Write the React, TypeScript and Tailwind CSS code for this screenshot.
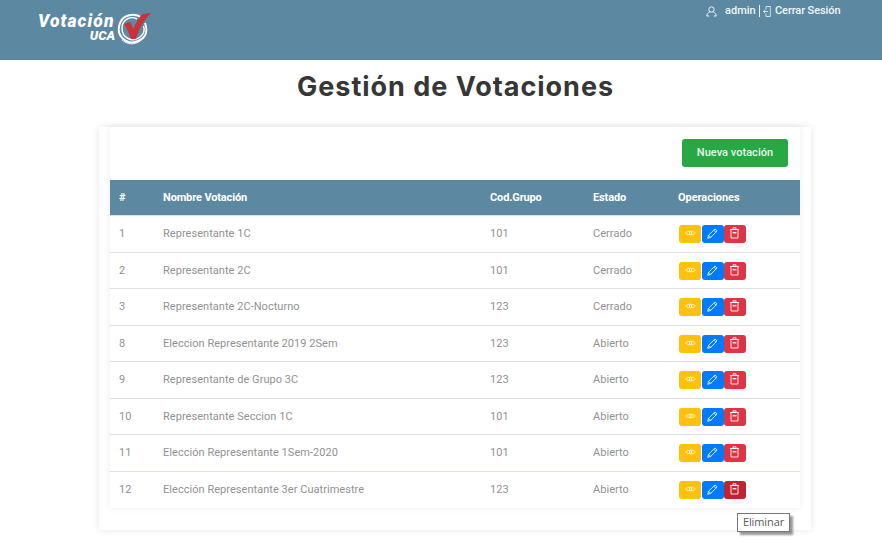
type Row = { id: number; name: string; code: number; state: string };

const rows: Row[] = [
  { id: 1, name: 'Representante 1C', code: 101, state: 'Cerrado' },
  { id: 2, name: 'Representante 2C', code: 101, state: 'Cerrado' },
  { id: 3, name: 'Representante 2C-Nocturno', code: 123, state: 'Cerrado' },
  { id: 8, name: 'Eleccion Representante 2019 2Sem', code: 123, state: 'Abierto' },
  { id: 9, name: 'Representante de Grupo 3C', code: 123, state: 'Abierto' },
  { id: 10, name: 'Representante Seccion 1C', code: 101, state: 'Abierto' },
  { id: 11, name: 'Elección Representante 1Sem-2020', code: 101, state: 'Abierto' },
  { id: 12, name: 'Elección Representante 3er Cuatrimestre', code: 123, state: 'Abierto' },
];

const columns = 'grid grid-cols-[44px_327px_103px_85px_131px] items-center [&>*]:pl-[9px]';

function Logo() {
  return (
    <div className="flex h-[36px] w-[115px] text-white">
      <div className="w-[78px] font-['Roboto',sans-serif] font-black italic">
        <div className="h-[18px] whitespace-nowrap text-[17.5px] leading-[20px] tracking-[1.1px]">Votación</div>
        <div className="pr-px text-right text-[13px] leading-[13px]">UCA</div>
      </div>
      <svg className="h-[36px] w-[36px]" viewBox="0 0 36 36" fill="none">
        <path d="M25.5 6.5C18 1 7 4 4 12C-1 25 11 35 22 30c8-3 10-10 7-18" stroke="#fff" strokeWidth="2" />
        <path d="M21 8C13 4 6 10 6 17c0 10 10 15 18 9 4-3 5-7 3.5-11" stroke="#fff" strokeWidth="1.4" />
        <path d="M6 29c8 7 20 4 24-7" stroke="#fff" strokeWidth=".9" />
        <path d="M7.5 13l6.5-2L17.5 18C20 11 23 6 26.5 3L35 2C28 9 23 17 20 28h-5C13 22 11 17 7.5 13Z" fill="#c83238" />
      </svg>
    </div>
  );
}

function Actions({ active }: { active: boolean }) {
  const button = 'flex h-[18px] w-[22px] justify-center rounded-[3px] pt-[3px]';
  return (
    <div className="flex gap-[0.5px] text-white/85">
      <button aria-label="Ver" className={`${button} bg-[#ffc10b]`}>
        <svg width="11" height="11" viewBox="0 0 11 11" fill="none" stroke="currentColor" strokeWidth=".9">
          <path d="M.6 5C3 2.6 8 2.6 10.4 5 8 7.4 3 7.4.6 5Z" />
          <circle cx="5.5" cy="5" r="1.2" />
        </svg>
      </button>
      <button aria-label="Editar" className={`${button} bg-[#007bff]`}>
        <svg width="11" height="11" viewBox="0 0 11 11" fill="none" stroke="currentColor">
          <path d="M.7 10.3l.9-3L8 .9l2.1 2.1-6.4 6.4-3 .9ZM1.6 7.3l2.1 2.1M6.8 2.1l2.1 2.1" />
        </svg>
      </button>
      <button aria-label="Eliminar" className={`${button} ${active ? 'bg-[#c02433]' : 'bg-[#dc3545]'}`}>
        <svg className="-ml-px -mt-px" width="11" height="12" viewBox="0 0 11 12" fill="none" stroke="currentColor">
          <path d="M2 2.5h7v8.5H2ZM.9 2.5h9.2M4 2.3V.8h3v1.5" />
          <path d="M3.6 5.7h3.8" strokeWidth="1.5" />
        </svg>
      </button>
    </div>
  );
}

export default function App() {
  return (
    <div className="relative h-[544px] overflow-hidden bg-white font-['Roboto',sans-serif]">
      <header className="flex h-[60px] justify-between bg-[#5c89a1] pl-[38px] pr-[42px]">
        <div className="pt-[11px]"><Logo /></div>
        <div className="flex h-[22px] items-center text-[11px] font-medium text-[#edf7fa]">
          <svg className="mr-[8px]" width="11" height="11" viewBox="0 0 11 11" fill="none" stroke="currentColor">
            <circle cx="5.5" cy="3.5" r="2.7" />
            <path d="M3.8 6C2 6.6.8 8 .8 10h2.4M7.2 6c1.8.6 3 2 3 4H7.8" />
          </svg>
          <span className="w-[31px] whitespace-nowrap">admin</span>
          <span className="mx-[3px] h-[12px] w-px bg-[#edf7fa]" />
          <svg className="mr-[4px]" width="8" height="11" viewBox="0 0 8 11" fill="none" stroke="currentColor" strokeWidth=".8">
            <path d="M3 3.5v-3h4.3v10H3v-3M5 5.5H.5M2.2 3.8L.5 5.5l1.7 1.7" />
          </svg>
          <span className="w-[65px] whitespace-nowrap tracking-[-0.09px]">Cerrar Sesión</span>
        </div>
      </header>

      <h1 className="pl-[297px] pt-[10px] font-['Inter',sans-serif] text-[27px] font-bold leading-[34px] tracking-[0.98px] whitespace-nowrap text-[#363636]">
        Gestión de Votaciones
      </h1>

      <main className="ml-[99px] mt-[23px] h-[403px] w-[712px] px-[11px] shadow-[0_0_7px_rgba(0,0,0,0.1)]">
        <section className="h-[381px] w-[690px] bg-white shadow-[0_0_7px_rgba(0,0,0,0.08)]">
          <div className="flex h-[53px] justify-end pr-[12px] pt-[12px]">
            <button className="h-[28px] w-[106px] rounded-[3px] bg-[#28a745] pt-px text-[11px] font-medium tracking-[0.03px] text-[#e9f7ec]">
              Nueva votación
            </button>
          </div>
          <div className={`${columns} h-[35.4px] bg-[#5c89a1] pt-px text-[11px] font-bold tracking-[-0.13px] text-white`}>
            <span>#</span><span>Nombre Votación</span><span>Cod.Grupo</span><span>Estado</span><span className="tracking-[-0.05px]">Operaciones</span>
          </div>
          {rows.map((row) => (
            <div key={row.id} className={`${columns} h-[36.5px] border-t border-[#dee2e6] text-[11px] tracking-[0.04px] text-[#929292] [&>span]:pt-px`}>
              <span>{row.id}</span><span>{row.name}</span><span>{row.code}</span><span>{row.state}</span>
              <div className="!pl-[10px]"><Actions active={row.id === 12} /></div>
            </div>
          ))}
        </section>
      </main>

      <div className="absolute left-[737px] top-[513px] flex h-[19px] w-[53px] items-center justify-center border border-[#777] bg-white font-['Open_Sans',sans-serif] text-[11px] tracking-[-0.1px] text-[#5b5b5b] shadow-[3px_3px_2px_rgba(0,0,0,0.4)]">
        Eliminar
      </div>
    </div>
  );
}
